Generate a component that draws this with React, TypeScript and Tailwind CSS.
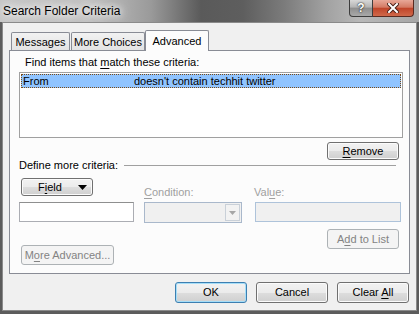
import type { ReactNode } from "react";

type BtnKind = "normal" | "default" | "disabled";

const btnStyle: Record<BtnKind, string> = {
  normal:
    "border-[#707070] bg-[linear-gradient(#f2f2f2_0%,#ebebeb_50%,#dddddd_51%,#cfcfcf_100%)] shadow-[inset_0_0_0_1px_#fbfbfb] text-black",
  default:
    "border-[#3c7fb1] bg-[linear-gradient(#f2f2f2_0%,#ebebeb_50%,#dddddd_51%,#cfcfcf_100%)] shadow-[inset_0_0_0_1px_#a6def8] text-black",
  disabled: "border-[#adb2b5] bg-[#f4f4f4] text-[#838383]",
};

function Btn({
  children,
  kind = "normal",
  className = "",
  raw = false,
}: {
  children: ReactNode;
  kind?: BtnKind;
  className?: string;
  raw?: boolean;
}) {
  return (
    <div
      className={`flex items-center justify-center rounded-[3px] border text-[11px] leading-none ${btnStyle[kind]} ${className}`}
    >
      {raw ? children : <span className="whitespace-pre">{children}</span>}
    </div>
  );
}

// underlined mnemonic letter
const U = ({ children }: { children: ReactNode }) => (
  <span className="underline decoration-1 underline-offset-[2px]">{children}</span>
);

function Tab({ label, active = false, className = "" }: { label: string; active?: boolean; className?: string }) {
  if (active) {
    return (
      <div
        className={`relative z-10 -mb-px flex h-[21px] items-start justify-center whitespace-nowrap rounded-t-[2px] border border-b-0 border-[#898c95] bg-[#fcfcfc] pt-[3px] text-[11px] leading-[14px] ${className}`}
      >
        {label}
      </div>
    );
  }
  return (
    <div
      className={`flex h-[18px] items-start justify-center whitespace-nowrap rounded-t-[2px] border border-b-0 border-[#898c95] bg-[linear-gradient(#f2f2f2,#e3e3e3)] pt-[2px] text-[11px] leading-[14px] ${className}`}
    >
      {label}
    </div>
  );
}

export default function App() {
  return (
    <div className="flex h-[314px] w-[419px] flex-col overflow-hidden bg-[#5c5c5c] font-['Liberation_Sans',Arial,sans-serif] text-black">
      {/* Title bar */}
      <div className="flex h-[22px] shrink-0 items-start justify-between bg-[linear-gradient(to_right,#c6c6c6_0%,#c0c0c0_22%,#9a9a9a_36%,#5a5a5a_48%,#5e5e5e_58%,#7c7c7c_68%,#a2a2a2_78%,#b8b8b8_86%,#a6a6a6_100%)]">
        <div className="ml-[3px] mt-[4px] text-[12px] leading-[14px] [text-shadow:0_0_6px_#ffffff,0_0_10px_#ffffff,0_0_14px_#e8e8e8]">
          Search Folder Criteria
        </div>
        <div className="mr-[5px] flex">
          <div className="flex h-[17px] w-[24px] items-center justify-center rounded-bl-[4px] border border-t-0 border-[#3d3d3d] bg-[linear-gradient(#d8d8d8_0%,#b4b4b4_45%,#8e8e8e_50%,#a9a9a9_100%)] text-[12px] font-bold leading-none text-white [text-shadow:0_0_2px_#222,0_0_1px_#222]">
            ?
          </div>
          <div className="flex h-[17px] w-[41px] items-center justify-center rounded-br-[4px] border border-l-0 border-t-0 border-[#5a2a20] bg-[linear-gradient(#e8a898_0%,#d47a64_45%,#c0452a_52%,#d0684a_100%)]">
            <svg width="12" height="10" viewBox="0 0 12 10">
              <path d="M2 1 L10 9 M10 1 L2 9" stroke="#4a2018" strokeWidth="4" strokeLinecap="square" />
              <path d="M2 1 L10 9 M10 1 L2 9" stroke="#ffffff" strokeWidth="2" strokeLinecap="square" />
            </svg>
          </div>
        </div>
      </div>

      {/* Client area */}
      <div className="ml-[2px] mr-[2px] flex h-[289px] flex-col border border-[#8a8a8a] bg-[#f0f0f0]">
        {/* Tabs */}
        <div className="ml-[6px] mt-[7px] flex items-end pl-[2px]">
          <Tab label="Messages" className="w-[59px]" />
          <Tab label="More Choices" className="ml-px w-[74px]" />
          <Tab label="Advanced" active className="w-[64px]" />
        </div>

        {/* Tab panel */}
        <div className="ml-[6px] flex h-[224px] w-[401px] flex-col border border-[#898c95] bg-[#fcfcfc] text-[11px]">
          <div className="ml-[15px] mt-[4px] leading-[15px]">
            Find items that <U>m</U>atch these criteria:
          </div>

          {/* Criteria list */}
          <div className="ml-[9px] mt-[2px] h-[66px] w-[384px] border border-[#a0a0a0] bg-white p-px">
            <div className="flex h-[14px] items-center border border-dotted border-[#7a4a16] bg-[#90c4ff] leading-[12px]">
              <span className="ml-px w-[111px]">From</span>
              <span>doesn't contain techhit twitter</span>
            </div>
          </div>

          <Btn className="mr-[10px] mt-[4px] h-[18px] w-[72px] self-end">
            <U>R</U>emove
          </Btn>

          {/* Define more criteria separator */}
          <div className="ml-[9px] mr-[13px] flex h-[11px] items-center">
            <span className="leading-[15px]">Define more criteria:</span>
            <div className="ml-[6px] h-px flex-1 bg-[#a0a0a0]" />
          </div>

          {/* Field / Condition / Value */}
          <div className="ml-[9px] mt-[7px] flex">
            <div className="flex w-[115px] flex-col">
              <Btn raw className="ml-[2px] h-[18px] w-[72px] justify-start">
                <span className="ml-[16px]">
                  F<U>i</U>eld
                </span>
                <svg className="ml-auto mr-[5px]" width="9" height="5" viewBox="0 0 9 5">
                  <path d="M0 0 H9 L4.5 5 Z" fill="#000" />
                </svg>
              </Btn>
              <div className="mt-[6px] h-[20px] w-[115px] border border-[#abadb3] border-t-[#8e8f8f] bg-white" />
            </div>

            <div className="ml-[10px] flex w-[98px] flex-col">
              <div className="mt-[7px] leading-[15px] text-[#a0a0a0]">
                <U>C</U>ondition:
              </div>
              <div className="mt-[2px] flex h-[21px] w-[98px] items-stretch border border-[#a9b8cb] bg-[#f0f0f0] p-px">
                <div className="flex-1" />
                <div className="flex w-[15px] items-center justify-center border border-[#c9d0d8] bg-[#f2f2f2]">
                  <svg width="7" height="4" viewBox="0 0 7 4">
                    <path d="M0 0 H7 L3.5 4 Z" fill="#a6a6a6" />
                  </svg>
                </div>
              </div>
            </div>

            <div className="ml-[13px] flex w-[146px] flex-col">
              <div className="-ml-px mt-[7px] leading-[15px] text-[#a0a0a0]">
                Val<U>u</U>e:
              </div>
              <div className="mt-[2px] h-[20px] w-[146px] border border-[#aec3da] bg-[#f0f0f0]" />
            </div>
          </div>

          {/* Add to List / More Advanced */}
          <div className="mt-[6px] flex items-start justify-between">
            <Btn kind="disabled" className="ml-[11px] mt-[16px] h-[20px] w-[93px]">
              M<U>o</U>re Advanced...
            </Btn>
            <Btn kind="disabled" className="mr-[10px] h-[20px] w-[72px]">
              A<U>d</U>d to List
            </Btn>
          </div>
        </div>

        {/* Dialog buttons */}
        <div className="mr-[7px] mt-[8px] flex justify-end gap-[9px]">
          <Btn kind="default" className="h-[21px] w-[72px]">
            OK
          </Btn>
          <Btn className="h-[21px] w-[72px]">Cancel</Btn>
          <Btn className="h-[21px] w-[72px]">
            Clear <U>A</U>ll
          </Btn>
        </div>
      </div>
    </div>
  );
}
